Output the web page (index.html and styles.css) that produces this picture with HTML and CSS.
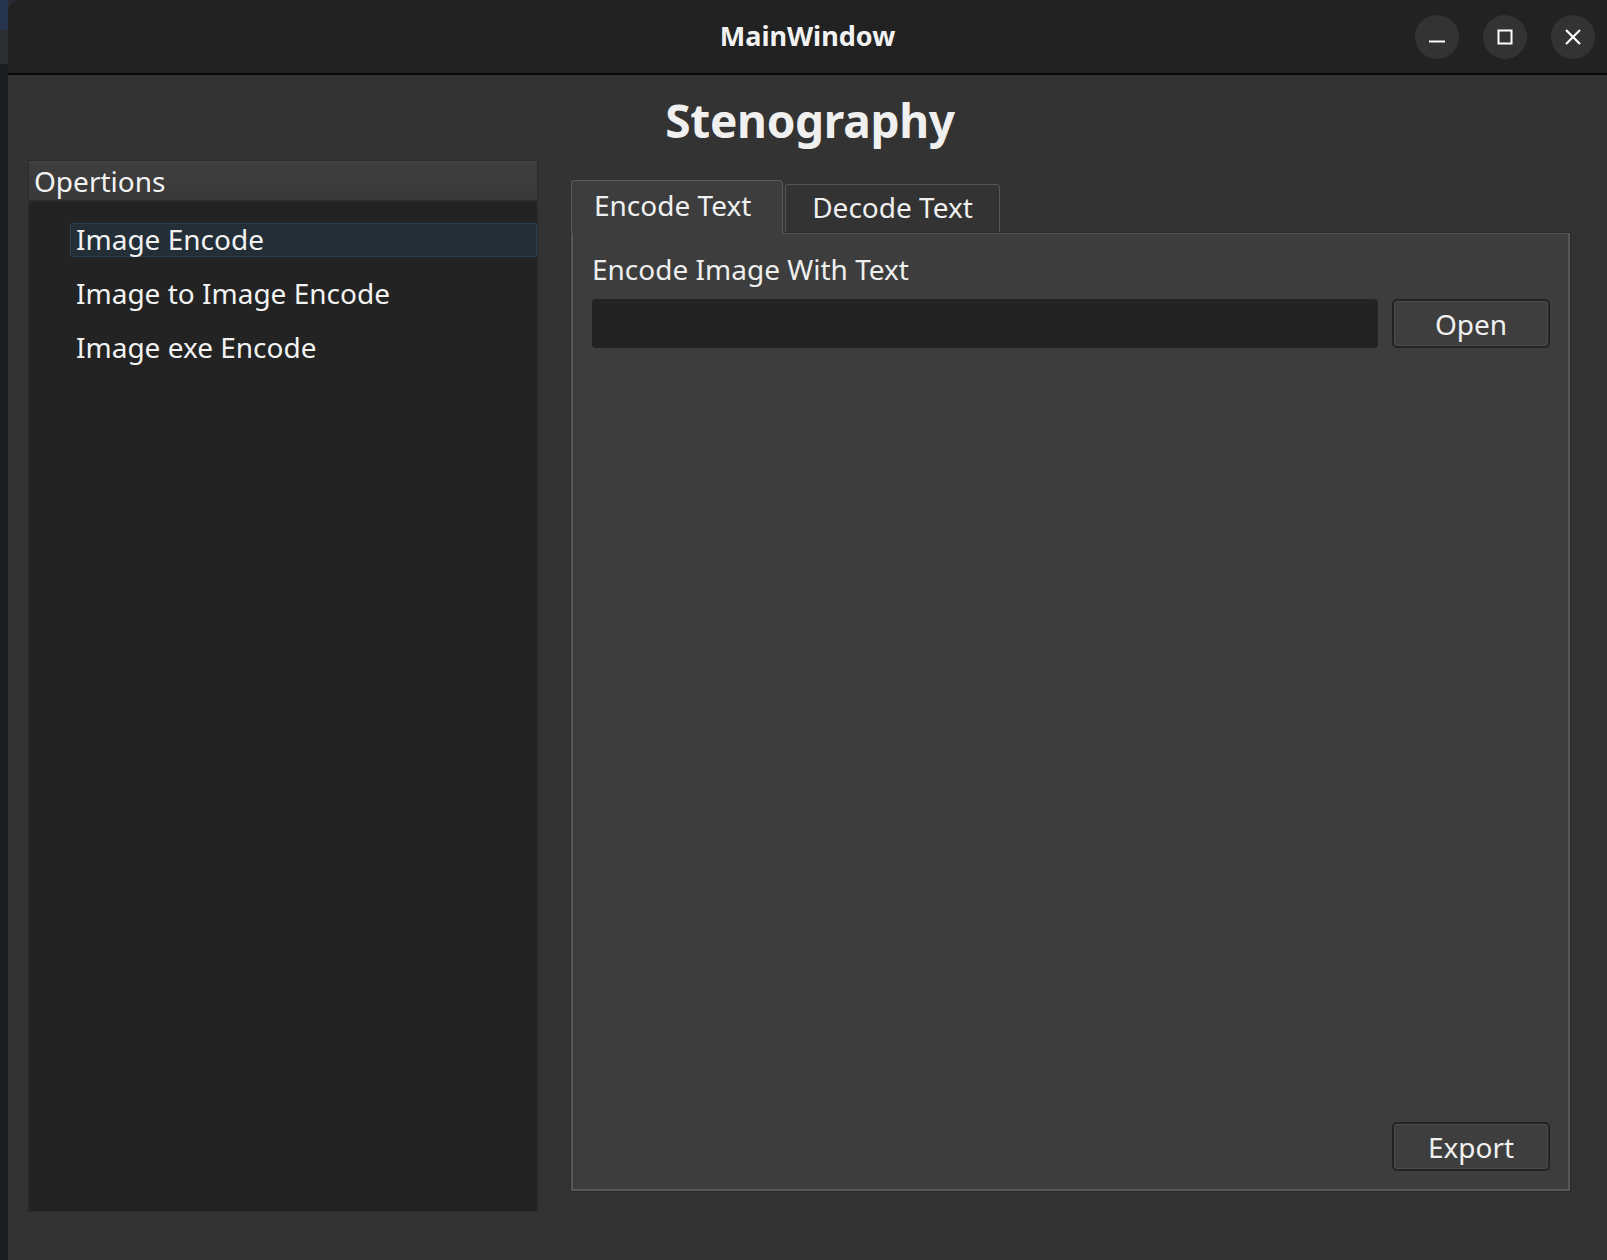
FILE: index.html
```html
<!DOCTYPE html>
<html>
<head>
<meta charset="utf-8">
<link rel="stylesheet" href="styles.css">
</head>
<body>
<div class="screen">
  <div class="desk-strip">
    <div class="desk-mark top"></div>
    <div class="desk-mark a"></div>
    <div class="desk-mark b"></div>
  </div>
  <div class="window">
    <header class="titlebar">
      <div class="tb-spacer"></div>
      <div class="tb-title">MainWindow</div>
      <div class="tb-controls">
        <button class="wbtn" aria-label="minimize">
          <svg width="16" height="16" viewBox="0 0 16 16"><path d="M0 12.5h16" stroke="#fff" stroke-width="2"/></svg>
        </button>
        <button class="wbtn" aria-label="maximize">
          <svg width="16" height="16" viewBox="0 0 16 16"><rect x="1.5" y="1.5" width="13" height="13" fill="none" stroke="#fff" stroke-width="2"/></svg>
        </button>
        <button class="wbtn" aria-label="close">
          <svg width="18" height="18" viewBox="0 0 18 18"><path d="M2 2L16 16M16 2L2 16" stroke="#fff" stroke-width="2.2"/></svg>
        </button>
      </div>
    </header>
    <main class="content">
      <h1 class="heading">Stenography</h1>
      <div class="columns">
        <section class="tree">
          <div class="tree-head">Opertions</div>
          <ul class="tree-list">
            <li class="tree-item selected">Image Encode</li>
            <li class="tree-item">Image to Image Encode</li>
            <li class="tree-item">Image exe Encode</li>
          </ul>
        </section>
        <section class="tabs">
          <div class="tab-bar">
            <div class="tab active">Encode Text</div>
            <div class="tab">Decode Text</div>
          </div>
          <div class="tab-pane">
            <div class="field-label">Encode Image With Text</div>
            <div class="field-row">
              <div class="line-edit"></div>
              <button class="push">Open</button>
            </div>
            <div class="pane-fill"></div>
            <div class="pane-foot">
              <button class="push">Export</button>
            </div>
          </div>
        </section>
      </div>
    </main>
  </div>
</div>
</body>
</html>
```
FILE: styles.css
```css
* { box-sizing: border-box; }
html, body {
  margin: 0;
  padding: 0;
  width: 1607px;
  height: 1260px;
  overflow: hidden;
  background: #2a2d33;
  font-family: "Noto Sans", "Open Sans", sans-serif;
  color: #eeeeee;
}
.screen {
  display: flex;
  width: 1607px;
  height: 1260px;
}
.desk-strip {
  width: 8px;
  flex: none;
  background: #23272e;
  display: flex;
  flex-direction: column;
}
.desk-mark.top { height: 30px; background: #273450; }
.desk-mark.a { height: 34px; background: #2b2d31; }
.desk-mark.b { flex: 1; background: #1c1d21; }

.window {
  flex: 1;
  display: flex;
  flex-direction: column;
  background: #333333;
  border-top-left-radius: 12px;
  overflow: hidden;
}
.titlebar {
  height: 75px;
  flex: none;
  background: #222222;
  border-bottom: 2px solid #0a0a0a;
  display: grid;
  grid-template-columns: 1fr auto 1fr;
  align-items: center;
}
.tb-title {
  font-weight: 700;
  font-size: 27px;
  color: #f2f2f2;
  padding-bottom: 2px;
}
.tb-controls {
  display: flex;
  justify-content: flex-end;
  gap: 24px;
  padding-right: 12px;
}
.wbtn {
  width: 44px;
  height: 44px;
  border-radius: 50%;
  border: none;
  background: #333333;
  display: flex;
  align-items: center;
  justify-content: center;
  padding: 0;
}

.content {
  flex: 1;
  display: flex;
  flex-direction: column;
  padding: 0 37px 0 20px;
}
.heading {
  margin: 0;
  height: 85px;
  padding-top: 18px;
  padding-left: 22px;
  text-align: center;
  font-size: 46px;
  line-height: 54px;
  font-weight: 700;
  color: #f0f0f0;
  letter-spacing: -0.3px;
}
.columns {
  display: flex;
  gap: 33px;
  align-items: flex-start;
}
.tree {
  width: 510px;
  height: 1052px;
  flex: none;
  background: #232323;
  border: 1px solid #2c2c2c;
}
.tree-head {
  height: 41px;
  background: linear-gradient(#3e3e3e, #393939);
  border-top: 1px solid #444;
  border-bottom: 2px solid #2a2a2a;
  font-size: 28px;
  line-height: 38px;
  padding-left: 5px;
  color: #f2f2f2;
}
.tree-list {
  list-style: none;
  margin: 0;
  padding: 21px 0 0 41px;
}
.tree-item {
  height: 34px;
  margin-bottom: 20px;
  font-size: 28px;
  line-height: 30px;
  padding-left: 5px;
  color: #f2f2f2;
  border: 1px solid transparent;
}
.tree-item.selected {
  background: #242e37;
  border: 1px solid #2d3f4c;
  border-radius: 2px;
}

.tabs {
  flex: 1;
  margin-top: 19px;
  display: flex;
  flex-direction: column;
}
.tab-bar {
  display: flex;
  align-items: flex-end;
  gap: 2px;
  height: 54px;
}
.tab {
  font-size: 28px;
  color: #f0f0f0;
  border: 1px solid #555555;
  border-bottom: none;
  border-radius: 4px 4px 0 0;
  padding: 0 22px;
}
.tab.active {
  height: 54px;
  width: 212px;
  background: #3d3d3d;
  line-height: 48px;
  position: relative;
  top: 1px;
  z-index: 1;
  border-color: #5a5a5a;
}
.tab:not(.active) {
  height: 49px;
  width: 215px;
  background: #333333;
  line-height: 44px;
  text-align: center;
}
.tab-pane {
  height: 958px;
  background: #3d3d3d;
  border: 2px solid #575757;
  border-top-width: 1px;
  outline: 1px solid #2b2b2b;
  display: flex;
  flex-direction: column;
  padding: 15px 18px 18px 19px;
}
.field-label {
  font-size: 28px;
  line-height: 40px;
  color: #eeeeee;
}
.field-row {
  display: flex;
  gap: 14px;
  margin-top: 10px;
}
.line-edit {
  flex: 1;
  height: 49px;
  background: #232323;
  border-radius: 4px;
}
.push {
  width: 158px;
  height: 49px;
  background: #3e3e3e;
  border: 2px solid #232323;
  box-shadow: inset 0 0 0 1px #4b4b4b;
  border-radius: 5px;
  font-family: inherit;
  font-size: 28px;
  color: #f0f0f0;
  padding: 0;
  line-height: 42px;
}
.pane-fill { flex: 1; }
.pane-foot {
  display: flex;
  justify-content: flex-end;
}
```
